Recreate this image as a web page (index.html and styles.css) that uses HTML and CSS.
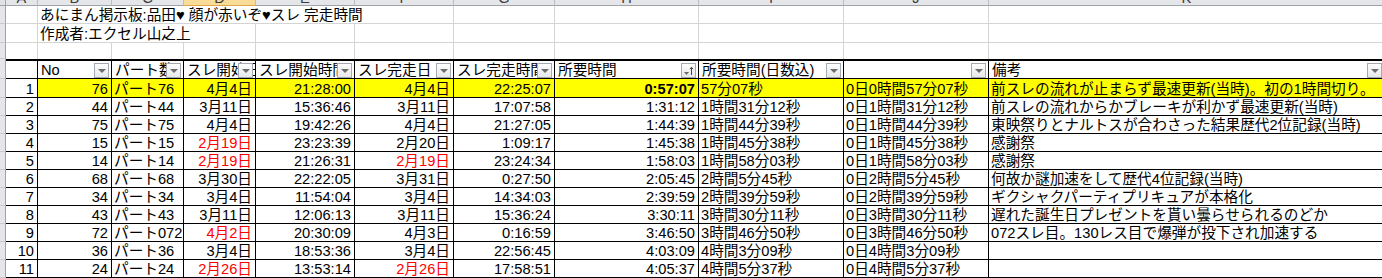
FILE: index.html
```html
<!DOCTYPE html>
<html lang="ja">
<head>
<meta charset="utf-8">
<title>完走時間</title>
<link rel="stylesheet" href="styles.css">
</head>
<body>
<div class="sheet">
  <div class="row heads">
    <div class="corner"></div>
    <div class="ch"><span>A</span></div>
    <div class="ch"><span>B</span></div>
    <div class="ch"><span>C</span></div>
    <div class="ch sel"><span>D</span></div>
    <div class="ch"><span>E</span></div>
    <div class="ch"><span>F</span></div>
    <div class="ch"><span>G</span></div>
    <div class="ch"><span>H</span></div>
    <div class="ch"><span>I</span></div>
    <div class="ch"><span>J</span></div>
    <div class="ch"><span>K</span></div>
  </div>

  <div class="row t-title">
    <div class="rh"></div>
    <div class="g"></div>
    <div class="g span5">あにまん掲示板:品田♥ 顔が赤いぞ♥スレ 完走時間</div>
    <div class="g"></div><div class="g"></div><div class="g"></div><div class="g"></div><div class="g"></div>
  </div>

  <div class="row t-author">
    <div class="rh"></div>
    <div class="g"></div>
    <div class="g span3">作成者:エクセル山之上</div>
    <div class="g"></div><div class="g"></div><div class="g"></div><div class="g"></div><div class="g"></div><div class="g"></div><div class="g"></div>
  </div>

  <div class="row t-empty">
    <div class="rh"></div>
    <div class="g"></div><div class="g"></div><div class="g"></div><div class="g"></div><div class="g"></div><div class="g"></div>
    <div class="g"></div><div class="g"></div><div class="g"></div><div class="g"></div><div class="g"></div>
  </div>

  <div class="row hd">
    <div class="rh"></div>
    <div class="c"></div>
    <div class="c">No<span class="fb"></span></div>
    <div class="c">パート数<span class="fb"></span></div>
    <div class="c">スレ開始日<span class="fb"></span></div>
    <div class="c">スレ開始時間<span class="fb"></span></div>
    <div class="c">スレ完走日<span class="fb"></span></div>
    <div class="c">スレ完走時間<span class="fb"></span></div>
    <div class="c">所要時間<span class="fb sort"><svg width="13" height="13" viewBox="0 0 13 13"><path d="M2 8h5l-2.5 3z" fill="#6b6b6b"/><path d="M9.5 11V3.5M8 5.2l1.5-2 1.5 2" stroke="#444" stroke-width="1" fill="none"/></svg></span></div>
    <div class="c">所要時間(日数込)<span class="fb"></span></div>
    <div class="c"><span class="fb"></span></div>
    <div class="c">備考<span class="fb"></span></div>
  </div>

  <div class="row d d1 hl">
    <div class="rh"></div>
    <div class="c r a">1</div>
    <div class="c r">76</div>
    <div class="c">パート76</div>
    <div class="c r">4月4日</div>
    <div class="c r">21:28:00</div>
    <div class="c r">4月4日</div>
    <div class="c r">22:25:07</div>
    <div class="c r b">0:57:07</div>
    <div class="c">57分07秒</div>
    <div class="c">0日0時間57分07秒</div>
    <div class="c">前スレの流れが止まらず最速更新(当時)。初の1時間切り。</div>
  </div>

  <div class="row d">
    <div class="rh"></div>
    <div class="c r">2</div>
    <div class="c r">44</div>
    <div class="c">パート44</div>
    <div class="c r">3月11日</div>
    <div class="c r">15:36:46</div>
    <div class="c r">3月11日</div>
    <div class="c r">17:07:58</div>
    <div class="c r">1:31:12</div>
    <div class="c">1時間31分12秒</div>
    <div class="c">0日1時間31分12秒</div>
    <div class="c">前スレの流れからかブレーキが利かず最速更新(当時)</div>
  </div>

  <div class="row d">
    <div class="rh"></div>
    <div class="c r">3</div>
    <div class="c r">75</div>
    <div class="c">パート75</div>
    <div class="c r">4月4日</div>
    <div class="c r">19:42:26</div>
    <div class="c r">4月4日</div>
    <div class="c r">21:27:05</div>
    <div class="c r">1:44:39</div>
    <div class="c">1時間44分39秒</div>
    <div class="c">0日1時間44分39秒</div>
    <div class="c">東映祭りとナルトスが合わさった結果歴代2位記録(当時)</div>
  </div>

  <div class="row d">
    <div class="rh"></div>
    <div class="c r">4</div>
    <div class="c r">15</div>
    <div class="c">パート15</div>
    <div class="c r red">2月19日</div>
    <div class="c r">23:23:39</div>
    <div class="c r">2月20日</div>
    <div class="c r">1:09:17</div>
    <div class="c r">1:45:38</div>
    <div class="c">1時間45分38秒</div>
    <div class="c">0日1時間45分38秒</div>
    <div class="c">感謝祭</div>
  </div>

  <div class="row d">
    <div class="rh"></div>
    <div class="c r">5</div>
    <div class="c r">14</div>
    <div class="c">パート14</div>
    <div class="c r red">2月19日</div>
    <div class="c r">21:26:31</div>
    <div class="c r red">2月19日</div>
    <div class="c r">23:24:34</div>
    <div class="c r">1:58:03</div>
    <div class="c">1時間58分03秒</div>
    <div class="c">0日1時間58分03秒</div>
    <div class="c">感謝祭</div>
  </div>

  <div class="row d">
    <div class="rh"></div>
    <div class="c r">6</div>
    <div class="c r">68</div>
    <div class="c">パート68</div>
    <div class="c r">3月30日</div>
    <div class="c r">22:22:05</div>
    <div class="c r">3月31日</div>
    <div class="c r">0:27:50</div>
    <div class="c r">2:05:45</div>
    <div class="c">2時間5分45秒</div>
    <div class="c">0日2時間5分45秒</div>
    <div class="c">何故か謎加速をして歴代4位記録(当時)</div>
  </div>

  <div class="row d">
    <div class="rh"></div>
    <div class="c r">7</div>
    <div class="c r">34</div>
    <div class="c">パート34</div>
    <div class="c r">3月4日</div>
    <div class="c r">11:54:04</div>
    <div class="c r">3月4日</div>
    <div class="c r">14:34:03</div>
    <div class="c r">2:39:59</div>
    <div class="c">2時間39分59秒</div>
    <div class="c">0日2時間39分59秒</div>
    <div class="c">ギクシャクパーティプリキュアが本格化</div>
  </div>

  <div class="row d">
    <div class="rh"></div>
    <div class="c r">8</div>
    <div class="c r">43</div>
    <div class="c">パート43</div>
    <div class="c r">3月11日</div>
    <div class="c r">12:06:13</div>
    <div class="c r">3月11日</div>
    <div class="c r">15:36:24</div>
    <div class="c r">3:30:11</div>
    <div class="c">3時間30分11秒</div>
    <div class="c">0日3時間30分11秒</div>
    <div class="c">遅れた誕生日プレゼントを貰い曇らせられるのどか</div>
  </div>

  <div class="row d">
    <div class="rh"></div>
    <div class="c r">9</div>
    <div class="c r">72</div>
    <div class="c">パート072</div>
    <div class="c r red">4月2日</div>
    <div class="c r">20:30:09</div>
    <div class="c r">4月3日</div>
    <div class="c r">0:16:59</div>
    <div class="c r">3:46:50</div>
    <div class="c">3時間46分50秒</div>
    <div class="c">0日3時間46分50秒</div>
    <div class="c">072スレ目。130レス目で爆弾が投下され加速する</div>
  </div>

  <div class="row d">
    <div class="rh"></div>
    <div class="c r">10</div>
    <div class="c r">36</div>
    <div class="c">パート36</div>
    <div class="c r">3月4日</div>
    <div class="c r">18:53:36</div>
    <div class="c r">3月4日</div>
    <div class="c r">22:56:45</div>
    <div class="c r">4:03:09</div>
    <div class="c">4時間3分09秒</div>
    <div class="c">0日4時間3分09秒</div>
    <div class="c"></div>
  </div>

  <div class="row d">
    <div class="rh"></div>
    <div class="c r">11</div>
    <div class="c r">24</div>
    <div class="c">パート24</div>
    <div class="c r red">2月26日</div>
    <div class="c r">13:53:14</div>
    <div class="c r red">2月26日</div>
    <div class="c r">17:58:51</div>
    <div class="c r">4:05:37</div>
    <div class="c">4時間5分37秒</div>
    <div class="c">0日4時間5分37秒</div>
    <div class="c"></div>
  </div>
</div>
</body>
</html>
```

FILE: styles.css
```css
* { box-sizing: border-box; }

html, body {
  margin: 0;
  background: #fff;
  overflow: hidden;
}

body {
  font-family: "Liberation Sans", "Noto Sans CJK JP", sans-serif;
  font-size: 14.67px;
  color: #000;
}

.sheet {
  width: 1385px;
}

.row {
  display: grid;
  grid-template-columns: 6px 32px 74px 72px 72px 99px 99px 101px 144px 145px 145px 396px;
}

/* column letter strip */
.heads { height: 6px; }

.corner {
  background: #dfe2e6;
  border-right: 1px solid #9ea3a9;
  border-bottom: 1px solid #9ea3a9;
}

.ch {
  background: #e4e6ea;
  border-right: 1px solid #b9bec5;
  border-bottom: 1px solid #9ea3a9;
  overflow: hidden;
  text-align: center;
  line-height: 16px;
  color: #3c3c3c;
}

.ch span {
  display: block;
  margin-top: -10px;
}

.ch.sel {
  background: #f8dc98;
  border-bottom-color: #e2a64a;
}

/* row header strip */
.rh {
  background: #e4e6ea;
  border-right: 1px solid #9ea3a9;
  border-bottom: 1px solid #c6cacf;
}

/* plain grid cells above the table */
.g {
  border-right: 1px solid #d4d4d4;
  border-bottom: 1px solid #d4d4d4;
  display: flex;
  align-items: flex-end;
  white-space: nowrap;
  line-height: 15px;
  padding-left: 2px;
}

.span5 { grid-column: span 5; }
.span3 { grid-column: span 3; }

.t-title { height: 18px; }
.t-author { height: 19px; }
.t-empty { height: 16px; }
.t-empty .g { border-bottom: 0; }

/* table cells */
.c {
  border-right: 1px solid #000;
  border-bottom: 1px solid #000;
  display: flex;
  align-items: flex-end;
  white-space: nowrap;
  overflow: hidden;
  line-height: 15px;
  padding: 0 3px 0 2px;
}

.r { justify-content: flex-end; }
.b { font-weight: bold; }
.red { color: #ff0000; }

.hd { height: 20px; }
.hd .c {
  border-top: 2px solid #000;
  position: relative;
  padding-left: 3px;
}

.d { height: 18px; }
.d1 { height: 19px; }

.hl .c { background: #ffff00; }
.hl .c.a { background: #fff; }

/* filter dropdown buttons */
.fb {
  position: absolute;
  right: 2px;
  bottom: 0;
  width: 15px;
  height: 15px;
  border: 1px solid #a3aab3;
  background: linear-gradient(#fdfdfd, #e6e8eb);
  display: flex;
  align-items: center;
  justify-content: center;
}

.fb::after {
  content: "";
  width: 0;
  height: 0;
  border-left: 4px solid transparent;
  border-right: 4px solid transparent;
  border-top: 4px solid #6b6b6b;
}

.fb.sort::after { display: none; }
.fb.sort svg { display: block; }
```
